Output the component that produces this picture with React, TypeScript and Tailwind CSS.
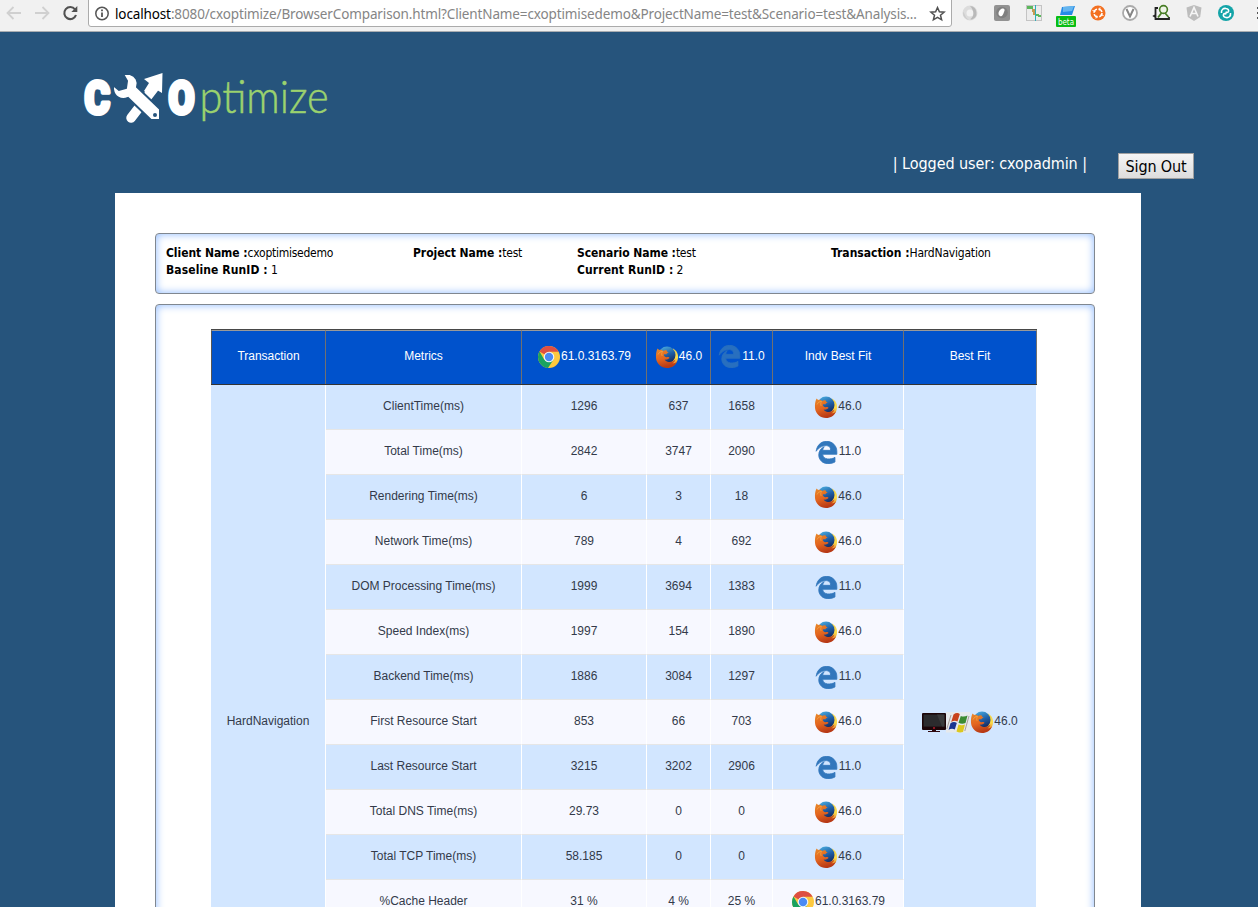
import React from "react";
import { FaEdgeLegacy } from "react-icons/fa6";

type Browser = "chrome" | "firefox" | "edge";

const rows: [string, string, string, string, Browser, string][] = [
  ["ClientTime(ms)", "1296", "637", "1658", "firefox", "46.0"],
  ["Total Time(ms)", "2842", "3747", "2090", "edge", "11.0"],
  ["Rendering Time(ms)", "6", "3", "18", "firefox", "46.0"],
  ["Network Time(ms)", "789", "4", "692", "firefox", "46.0"],
  ["DOM Processing Time(ms)", "1999", "3694", "1383", "edge", "11.0"],
  ["Speed Index(ms)", "1997", "154", "1890", "firefox", "46.0"],
  ["Backend Time(ms)", "1886", "3084", "1297", "edge", "11.0"],
  ["First Resource Start", "853", "66", "703", "firefox", "46.0"],
  ["Last Resource Start", "3215", "3202", "2906", "edge", "11.0"],
  ["Total DNS Time(ms)", "29.73", "0", "0", "firefox", "46.0"],
  ["Total TCP Time(ms)", "58.185", "0", "0", "firefox", "46.0"],
  ["%Cache Header", "31 %", "4 %", "25 %", "chrome", "61.0.3163.79"],
];

function Chrome() {
  return (
    <svg viewBox="0 0 24 24" className="h-6 w-6 shrink-0">
      <circle cx="12" cy="12" r="11" fill="#fdc93f" />
      <path d="M12 12 2.5 6.5A11 11 0 0 1 21.6 6.8H12Z" fill="#dd4f43" />
      <path d="M2.5 6.5A11 11 0 0 0 11 23L16.6 14.6 12 12 7.3 14.7Z" fill="#1aa260" />
      <circle cx="12" cy="12" r="5.3" fill="#f4f6f8" />
      <circle cx="12" cy="12" r="4.2" fill="#4a8af4" />
    </svg>
  );
}

function Firefox() {
  return (
    <svg viewBox="0 0 24 24" className="h-6 w-6 shrink-0">
      <defs>
        <linearGradient id="ffBody" x1="0" y1="0" x2="0.3" y2="1">
          <stop offset="0" stopColor="#e8892a" />
          <stop offset="0.55" stopColor="#e4661f" />
          <stop offset="1" stopColor="#b83a16" />
        </linearGradient>
        <linearGradient id="ffGlobe" x1="0.3" y1="0" x2="0.7" y2="1">
          <stop offset="0" stopColor="#48a8dc" />
          <stop offset="0.5" stopColor="#1f5fa6" />
          <stop offset="1" stopColor="#152457" />
        </linearGradient>
        <linearGradient id="ffTail" x1="0" y1="0" x2="0" y2="1">
          <stop offset="0" stopColor="#f3d24a" />
          <stop offset="0.5" stopColor="#fbdc4c" />
          <stop offset="1" stopColor="#dd6a1e" />
        </linearGradient>
      </defs>
      <path d="M18 3.500C22 5.700 23.300 9.500 23 13c-.5 4-3 7.500-7 9L12 16Z" fill="url(#ffTail)" />
      <circle cx="12" cy="9.900" r="8.500" fill="url(#ffGlobe)" />
      <path
        d="M2.500 3.500C1.100 6.500.8 9.500 1 13c.6 6 5.500 10 11 10 4.800 0 8.700-2.600 10.200-7-1.500 1.800-3 2.400-4.700 2.600 1.600-1.200 2.500-2.400 2.900-4-2.300 2.300-5.400 3-7.900 2.200-1.500-.5-2.400-1.300-2.800-2.300 1.800.5 3.300-.4 4.800-1.500-.3-1.200-1.700-1-2.900-.8-1.700-.1-2.900-1-2.800-2.600.8-.5 1.700-.3 2.600 0-.1-1.100.7-1.700 2.200-2.200-1.200-.5-1.900-1.100-1.900-2-1.500-.4-2.700-.1-3.600.5C6.900 4.900 6 4.500 4.900 5c-1.100-.2-1.700-.7-2.400-1.500Z"
        fill="url(#ffBody)"
      />
      <path d="M3 9.500c1-2 2.500-3 4.500-3.200-.8 1.700-1 3-.4 4.500" stroke="#f2a040" strokeWidth="1" fill="none" />
    </svg>
  );
}

function Edge({ faded = false }: { faded?: boolean }) {
  return (
    <span className={`flex h-6 w-6 shrink-0 items-center justify-center ${faded ? "opacity-80" : ""}`}>
      <FaEdgeLegacy className="mr-px h-[23px] w-[23px] stroke-[#3277bc] stroke-[18px] text-[#3277bc]" />
    </span>
  );
}

function BrowserIcon({ name }: { name: Browser }) {
  if (name === "chrome") return <Chrome />;
  if (name === "firefox") return <Firefox />;
  return <Edge />;
}

function Monitor() {
  return (
    <svg viewBox="0 0 24 24" className="mt-px h-6 w-6 shrink-0">
      <rect x="0" y="2" width="24" height="17" rx="1" fill="#1c0508" />
      <rect x="1.6" y="3.6" width="20.8" height="12" fill="#2b2b2d" />
      <path d="M15 3.6h7.4v12H20Z" fill="#3b3b3c" />
      <rect x="11" y="16" width="2" height="2" fill="#8d1420" />
      <path d="M10 19h4v1h4V21H6v-1h4Z" fill="#300a10" />
    </svg>
  );
}

function Windows() {
  return (
    <svg viewBox="0 0 24 24" className="mt-px h-6 w-6 shrink-0">
      <rect y="1" width="24" height="20.5" fill="#e6e9ec" />
      <path d="M7.500 3.500Q11 1 13.800 3L11.500 10.500Q8.500 8.600 5.200 11Z" fill="#c8421c" />
      <path d="M14.800 5Q18 6.300 21.500 4.500L19.500 12Q16 13.500 12.500 11.800Z" fill="#3b8b32" />
      <path d="M4.500 12.200Q8 10 10.800 12L8.800 18.500Q5.500 17 2.500 19Z" fill="#1a3590" />
      <path d="M12.500 13.500Q15.500 15 19 13.600L17 21Q13.500 22.200 10.500 20.500Z" fill="#dcc81f" />
      <path d="M5 4 .8 18M23 5 18.800 20" stroke="#9b8c85" strokeWidth=".8" fill="none" />
    </svg>
  );
}

function Toolbar() {
  return (
    <div className="flex h-8 shrink-0 border-b border-[#a9adb1] bg-[#f1f1f1]">
      <svg viewBox="0 0 88 31" className="h-[31px] w-[88px] shrink-0" fill="none">
        <path d="M21 13H8M13.5 7 7.5 13l6 6" stroke="#d0d0d0" strokeWidth="1.8" />
        <path d="M35 13h13M42.500 7l6 6-6 6" stroke="#d0d0d0" strokeWidth="1.8" />
        <path d="M75 9.300A6 6 0 1 0 76 15" stroke="#515151" strokeWidth="2.100" />
        <path d="M77.300 6v6h-6Z" fill="#515151" />
      </svg>
      <div className="-mt-1 flex h-[31px] w-[864px] shrink-0 items-center rounded-[3px] border border-[#ababab] bg-white pt-1">
        <svg viewBox="0 0 26 26" className="h-[26px] w-[26px] shrink-0" fill="none">
          <circle cx="13" cy="12.500" r="6.200" stroke="#555" strokeWidth="1.500" />
          <path d="M13 11.500v4.500M13 8.500v1.700" stroke="#555" strokeWidth="1.800" />
        </svg>
        <div className="w-[806px] whitespace-nowrap font-['Noto_Sans'] text-[13.5px] leading-[20px] tracking-[-0.13px] text-[#858585]">
          <span className="text-black">localhost</span>
          :8080/cxoptimize/BrowserComparison.html?ClientName=cxoptimisedemo&amp;ProjectName=test&amp;Scenario=test&amp;Analysis...
        </div>
        <svg viewBox="0 0 24 24" className="ml-1 h-6 w-6 shrink-0" fill="none">
          <path d="m12.500 5.500 1.900 4.300 4.700.4-3.600 3.100 1.100 4.500-4.100-2.400-4.100 2.400 1.100-4.500-3.600-3.100 4.700-.4Z" stroke="#505050" strokeWidth="1.500" />
        </svg>
      </div>
      <svg viewBox="0 0 306 31" className="h-[31px] w-[306px] shrink-0" fill="none">
        <circle cx="18" cy="13" r="5.500" stroke="#dcdcdc" strokeWidth="4" />
        <path d="M18 6a7 7 0 0 1 2 13.500c-1 .3-1.500 0-1.500-.5 4-3 4-8-.5-13Z" fill="#b9b9b9" />
        <path d="M17 20A7.300 7.300 0 0 1 11 12c2 1 1.500 5 6 8Z" fill="#cccccc" />
        <rect x="42" y="5" width="16" height="16" rx="2" fill="#929292" />
        <circle cx="50" cy="12.500" r="5.800" fill="#808080" />
        <path d="M48 10c3-3 6-1 4 2-1 3-2 5-4 4-2-1-2-4 0-6Z" fill="#fff" />
        <rect x="74.500" y="5.500" width="15" height="15" fill="#ececec" stroke="#c4c4c4" />
        <path d="M75 6h6v3h-6ZM84 14h3v2h-3ZM86 15h3v2h-3Z" fill="#5cb85c" />
        <path d="M80 9h3v6h-2v-3h-1Z" fill="#c49c52" />
        <path d="M83.500 5v16" stroke="#2dafb9" />
        <path d="m110 7 13-1-3 9h-12Z" fill="#258be6" />
        <path d="m111 7 11-1-2 5-9 1Z" fill="#64b5ef" />
        <rect x="104" y="16" width="20" height="11" rx="1" fill="#08bd14" />
        <text x="106" y="25" fill="white" fontFamily="DejaVu Sans" fontSize="8" textLength="16" lengthAdjust="spacingAndGlyphs">beta</text>
        <circle cx="146" cy="13" r="7.500" fill="#f37021" />
        <circle cx="146" cy="13" r="4" stroke="#fff" strokeWidth="1.500" strokeDasharray="4.800 1.480" />
        <path d="m140.500 10.500 3 .8m5 3.400 3 .8m-3.400-8-.8 3m-2.600 5-.8 3" stroke="#fff" strokeWidth="1" />
        <circle cx="178" cy="13" r="7" fill="#fff" stroke="#aaa" strokeWidth="1.800" />
        <path d="m174.500 9 3.500 7.500 3.500-7.500" stroke="#858585" strokeWidth="2" />
        <path d="M206 8h-2.500v11H217v-2M203.500 15l-1.500 1 1.500 1" stroke="#222" strokeWidth="1.800" />
        <circle cx="211.500" cy="9.500" r="3.900" fill="#eef3e7" stroke="#477c25" strokeWidth="1.600" />
        <path d="m209.500 13-3.500 4.500m7-4.500 3.500 4" stroke="#477c25" strokeWidth="1.800" />
        <path d="m242 5 7.500 2.500-1.300 9.500-6.200 4-6.200-4-1.300-9.500Z" fill="#bdbdbd" />
        <path d="m238 16.500 4-9 4 9m-6.500-3h5" stroke="#f6f6f6" strokeWidth="1.600" />
        <circle cx="274" cy="13" r="8" fill="#14a4a8" />
        <path d="M269.500 13c-.5-3.500 2-5 4.500-4.500 2 .3 3 1.500 2.500 3-.5 1.200-2 1-3 .3M278.500 13c.5 3.500-2 5-4.500 4.500-2-.3-3-1.500-2.500-3 .5-1.200 2-1 3-.3" stroke="#fff" strokeWidth="1.600" />
        <path d="M305 7h2v2h-2ZM305 12h2v2h-2ZM305 17h2v2h-2Z" fill="#555" />
      </svg>
    </div>
  );
}

function Logo() {
  return (
    <svg viewBox="0 0 280 64" className="ml-[76px] mt-[33px] h-16 w-[280px]">
      <g fontFamily="Roboto" fontWeight="900" fontSize="47" fill="white" stroke="white" strokeWidth="4" strokeLinejoin="round">
        <text x="8.500" y="48.500" textLength="25.500" lengthAdjust="spacingAndGlyphs">C</text>
        <text x="92.500" y="48.500" textLength="26" lengthAdjust="spacingAndGlyphs">O</text>
      </g>
      <path d="M55 53 78 23" stroke="white" strokeWidth="9.500" strokeLinecap="round" />
      <path d="m68 14 18.500-6-.5 20-5-3-5 7-8-6 5-8Z" fill="white" />
      <path
        d="m47 9 7 0c6 2 9 7 7 13l23 22v11h-9L52 33c-7 3-14-1-15-9l0-4 6 5 7-2 1-7Z"
        fill="white"
        stroke="#26547c"
        strokeWidth="2"
      />
      <circle cx="79" cy="50" r="2" fill="#26547c" />
      <g transform="translate(123.500 48) scale(0.850 1)">
        <text fontFamily="Lato" fontWeight="300" fontSize="45" fill="#9bd26e" stroke="#9bd26e" strokeWidth="0.500" textLength="152" lengthAdjust="spacingAndGlyphs">
          ptimize
        </text>
      </g>
    </svg>
  );
}

function Cell({ children, className = "" }: { children?: React.ReactNode; className?: string }) {
  return <div className={`flex items-center justify-center border-r ${className}`}>{children}</div>;
}

const Label = ({ children }: { children: React.ReactNode }) => (
  <span className="mb-0.5 whitespace-nowrap">{children}</span>
);

const columns = "grid grid-cols-[115px_196px_125px_64px_62px_131px_133px]";
const innerColumns = "grid h-[45px] grid-cols-[196px_125px_64px_62px_131px]";
const headCell = "border-t border-r-[#707070] border-t-[#999] pb-0.5 text-white";

function ComparisonTable() {
  return (
    <div className="ml-[55px] mt-6 w-[826px] font-['Liberation_Sans',sans-serif] text-[12px] leading-[16px] text-[#333a4a]">
      <div className={`${columns} h-14 border-y border-[#333] border-t-[#484848] bg-[#0052cc]`}>
        <Cell className={`${headCell} border-l border-l-[#555]`}><Label>Transaction</Label></Cell>
        <Cell className={headCell}><Label>Metrics</Label></Cell>
        <Cell className={headCell}><Chrome /><Label>61.0.3163.79</Label></Cell>
        <Cell className={headCell}><Firefox /><Label>46.0</Label></Cell>
        <Cell className={headCell}><Edge faded /><Label>11.0</Label></Cell>
        <Cell className={headCell}><Label>Indv Best Fit</Label></Cell>
        <Cell className={headCell}><Label>Best Fit</Label></Cell>
      </div>
      <div className="flex h-[674px]">
        <Cell className="w-[115px] border-white bg-[#d2e6ff]"><Label>HardNavigation</Label></Cell>
        <div className="w-[578px]">
          {rows.map(([metric, chrome, firefox, edge, best, version], i) => (
            <div key={metric} className={`${innerColumns} ${i % 2 ? "bg-[#f7f8ff]" : "bg-[#d2e6ff]"}`}>
              {[metric, chrome, firefox, edge].map((value, j) => (
                <Cell key={j} className="border-b border-r-white border-b-[#e6e6e6]"><Label>{value}</Label></Cell>
              ))}
              <Cell className="border-b border-r-white border-b-[#e6e6e6]">
                <BrowserIcon name={best} /><Label>{version}</Label>
              </Cell>
            </div>
          ))}
        </div>
        <Cell className="w-[133px] border-white bg-[#d2e6ff]">
          <Monitor /><Windows /><Firefox /><Label>46.0</Label>
        </Cell>
      </div>
    </div>
  );
}

const box = "w-[940px] rounded-[4px] border border-[#808790] shadow-[inset_0_0_8px_#8ab8ff]";

export default function App() {
  return (
    <div className="flex h-[907px] w-[1258px] flex-col overflow-hidden bg-[#26547c]">
      <Toolbar />
      <header className="h-[161px] shrink-0 overflow-hidden font-['DejaVu_Sans_Condensed','DejaVu_Sans',sans-serif]">
        <Logo />
        <div className="mr-16 mt-6 flex items-start justify-end text-[16px]">
          <span className="mr-[31px] whitespace-nowrap leading-[22px] tracking-[-0.06px] text-white">| Logged user: cxopadmin |</span>
          <button className="h-[26px] w-[76px] whitespace-nowrap border border-[#a0a0a0] bg-gradient-to-b from-[#f5f5f5] to-[#dddddd] pt-px leading-6 tracking-[-0.15px] text-black">
            Sign Out
          </button>
        </div>
      </header>
      <main className="mx-[115px] h-[714px] w-[1026px] overflow-hidden bg-white px-10 pt-10">
        <section
          className={`${box} grid h-[61px] grid-cols-[247px_164px_254px_1fr] content-start pl-[10px] pt-[11px] font-['DejaVu_Sans_Condensed','DejaVu_Sans',sans-serif] text-[12px] leading-[17px] tracking-[-0.25px] text-black`}
        >
          <div><b className="tracking-[-0.05px]">Client Name :</b>cxoptimisedemo</div>
          <div><b className="tracking-[-0.05px]">Project Name :</b>test</div>
          <div><b className="tracking-[-0.05px]">Scenario Name :</b>test</div>
          <div><b className="tracking-[0px]">Transaction :</b><span className="tracking-[-0.2px]">HardNavigation</span></div>
          <div><b className="tracking-[0.1px]">Baseline RunID :</b> 1</div>
          <div />
          <div><b className="tracking-[0.1px]">Current RunID :</b> 2</div>
        </section>
        <section className={`${box} mt-[10px] h-[800px]`}>
          <ComparisonTable />
        </section>
      </main>
    </div>
  );
}
